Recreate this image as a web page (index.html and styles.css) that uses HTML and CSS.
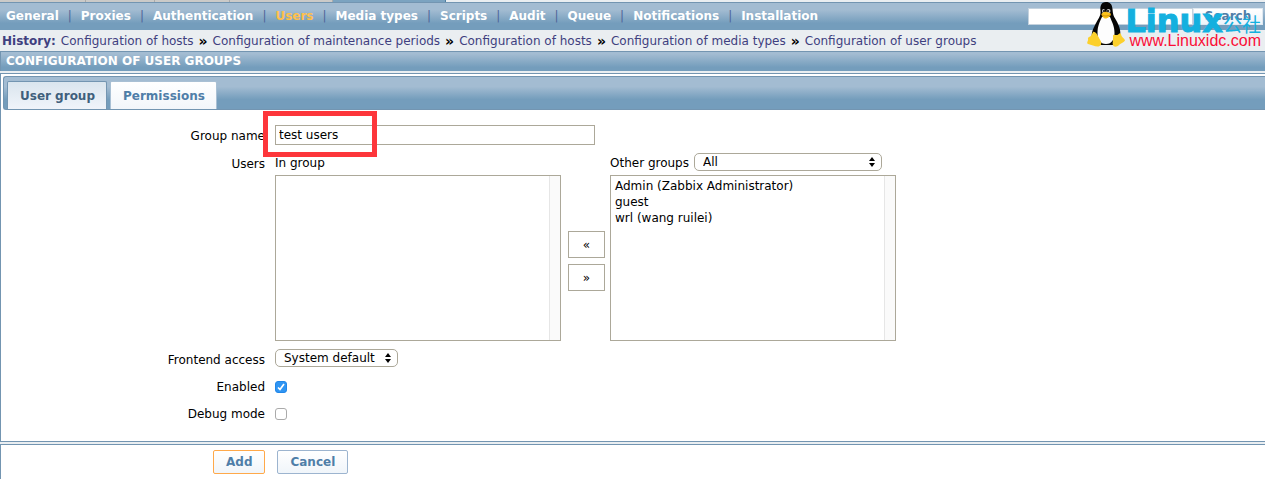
FILE: index.html
```
<!DOCTYPE html>
<html lang="en">
<head>
  <meta charset="utf-8">
  <title>Configuration of user groups</title>
  <link rel="stylesheet" href="styles.css">
</head>
<body>
  <div class="main-tabs">
    <span class="main-tab"></span>
    <span class="main-tab"></span>
    <span class="main-tab"></span>
    <span class="main-tab"></span>
    <span class="main-tab active"></span>
  </div>
  <div class="nav-bar">
    <nav class="nav-links">
      <a href="#">General</a>
      <a href="#">Proxies</a>
      <a href="#">Authentication</a>
      <a href="#" class="active">Users</a>
      <a href="#">Media types</a>
      <a href="#">Scripts</a>
      <a href="#">Audit</a>
      <a href="#">Queue</a>
      <a href="#">Notifications</a>
      <a href="#">Installation</a>
    </nav>
    <form class="search">
      <input type="text" aria-label="Search">
      <button type="button">Search</button>
    </form>
  </div>
  <div class="history">
    <b>History:</b>
    <a href="#">Configuration of hosts</a> <span>»</span>
    <a href="#">Configuration of maintenance periods</a> <span>»</span>
    <a href="#">Configuration of hosts</a> <span>»</span>
    <a href="#">Configuration of media types</a> <span>»</span>
    <a href="#">Configuration of user groups</a>
  </div>
  <h1>CONFIGURATION OF USER GROUPS</h1>

  <form class="group-form">
    <div class="panel">
      <div class="tabs">
        <button type="button" class="tab active">User group</button>
        <button type="button" class="tab">Permissions</button>
      </div>
      <div class="fields">
        <label for="name">Group name</label>
        <div class="name-field">
          <input type="text" id="name" value="test users">
          <div class="highlight"></div>
        </div>

        <label for="in-group">Users</label>
        <div class="twin-box">
          <div>
            <div class="list-head"><label for="in-group">In group</label></div>
            <select id="in-group" class="list" multiple></select>
          </div>
          <div class="move-buttons">
            <button type="button" aria-label="Add to group">«</button>
            <button type="button" aria-label="Remove from group">»</button>
          </div>
          <div>
            <div class="list-head">
              <label for="other-groups">Other groups</label>
              <select id="other-groups" class="dropdown wide">
                <option>All</option>
              </select>
            </div>
            <select class="list" aria-label="Users in other groups" multiple>
              <option>Admin (Zabbix Administrator)</option>
              <option>guest</option>
              <option>wrl (wang ruilei)</option>
            </select>
          </div>
        </div>

        <label for="access">Frontend access</label>
        <div>
          <select id="access" class="dropdown">
            <option>System default</option>
          </select>
        </div>

        <label for="enabled">Enabled</label>
        <div><input type="checkbox" id="enabled" checked></div>

        <label for="debug">Debug mode</label>
        <div><input type="checkbox" id="debug"></div>
      </div>
    </div>
    <div class="actions">
      <button type="button" class="primary">Add</button>
      <button type="button">Cancel</button>
    </div>
  </form>

  <div class="watermark">
    <svg width="38" height="45" viewBox="0 0 38 45">
      <path d="M19 0C14 0 13 4 13.500 9C14 14 11 17 8.500 22C6 27 3.500 32 5.500 37L12 43H27L32 37C35 31 32.500 24 29 18C26 13 26 12 25.500 7C25 2 23 0 19 0Z" fill="#050505"/>
      <path d="M15 15C13 19 10.500 24 10.500 31C10.500 37 13 42 19 42C25 42 27.500 37 27.500 31C27.500 24 25 20 23 15Z" fill="#fdfdfd"/>
      <ellipse cx="16.500" cy="9" rx="1.500" ry="2" fill="#ccc"/>
      <ellipse cx="21.500" cy="9" rx="2" ry="2" fill="#ccc"/>
      <circle cx="17" cy="9" r="1" fill="#000"/>
      <circle cx="21" cy="9" r="1" fill="#000"/>
      <path d="M14.500 12C16 10 18 9.500 19.500 10C22 10.500 24 11 24 12.500C23.500 14 21 16.500 18.500 16.500C16.500 16.500 14.500 14 14.500 12Z" fill="#fbc21a"/>
      <path d="M14.500 12.500C17 14.500 20 14.500 24 12.500" fill="none" stroke="#b47a08" stroke-width=".7"/>
      <path d="M6 30C8 29 10 32 11.500 35C13 38 15 40 14 42.500C12.500 45.500 9 44.500 6 43.500L1 42C-1 41 1.500 39 1 37C0.500 34.500 4 35 4.500 33Z" fill="#fcd02c"/>
      <path d="M26 34C26 32 28 33 30 33C32 33 32.500 30 34 32C34 35 38 37 38 38.500C37 40.500 34 41 32 43C30 45.500 26.500 45 26 43C25 41 26.500 38 26 34Z" fill="#fcd02c"/>
    </svg>
    <div class="watermark-text">
      <div class="watermark-name">Linux<span>公社</span></div>
      <div class="watermark-url">www.Linuxidc.com</div>
    </div>
  </div>
</body>
</html>
```
FILE: styles.css
```
* {
  box-sizing: border-box;
}

body {
  display: flex;
  flex-direction: column;
  margin: 0;
  position: relative;
  min-height: 100vh;
  background-color: #fff;
  color: #000;
  font-family: Verdana, "DejaVu Sans", sans-serif;
  font-size: 12px;
  line-height: 16px;
}

input,
select,
button {
  margin: 0;
  font-family: inherit;
  font-size: inherit;
  color: inherit;
}

a {
  text-decoration: none;
}

/* header */
.main-tabs {
  display: grid;
  grid-template-columns: 86px 69px 75px 103px 113px;
  height: 2px;
  background-color: #eaeef1;
}

.main-tab {
  background-color: #cbcac8;
  border-right: 1px solid #aaa;
}

.main-tab.active {
  background-color: #7ba3c0;
  border-color: #4d7ea0;
}

.nav-bar {
  display: flex;
  justify-content: space-between;
  align-items: flex-start;
  height: 28px;
  padding: 5px 2px 0 6px;
  border-top: 1px solid #7395b1;
  background: linear-gradient(#a3bcd2 25%, #749dbc 75%);
}

.nav-links {
  display: flex;
}

.nav-links a {
  color: #fff;
  font-weight: bold;
}

.nav-links a + a::before {
  content: "|";
  display: inline-block;
  width: 22px;
  text-align: center;
  font-weight: normal;
  color: #4e6599;
}

.nav-links .active {
  color: #ffc04a;
}

.search {
  display: flex;
}

.search input {
  width: 165px;
  height: 17px;
  border: 1px solid #c4d2de;
  background-color: #fff;
}

.search button {
  width: 70px;
  height: 17px;
  padding: 0;
  border: 1px solid #dfe8f0;
  background: linear-gradient(#fff, #eef4fa);
  color: #4f7ea8;
  font-weight: bold;
  line-height: 15px;
}

.history {
  display: flex;
  gap: 5px;
  height: 21px;
  padding: 3px 2px;
  background-color: #eaeef1;
  color: #000;
  white-space: nowrap;
}

.history b,
.history a {
  color: #403f7f;
}

.history span {
  font-size: 14px;
  font-weight: bold;
}

h1 {
  height: 20px;
  margin: 0 0 2px;
  padding: 0 5px;
  border-top: 1px solid #7395b1;
  border-left: 1px solid #7395b1;
  background: linear-gradient(#a3bcd2 10%, #749dbc 80%);
  color: #fff;
  font-size: 12px;
  line-height: 18px;
}

/* form panel */
.group-form {
  display: flex;
  flex: 1;
  flex-direction: column;
}

.panel {
  border: 1px solid #7395b1;
  border-right: none;
  padding: 2px 0 19px 2px;
  background-color: #fff;
  box-shadow: 0 -2px #eaeef1;
}

.tabs {
  display: flex;
  align-items: flex-end;
  gap: 3px;
  height: 34px;
  padding-left: 3px;
  border: 1px solid #7395b1;
  border-right: none;
  border-radius: 3px 0 0 3px;
  background: linear-gradient(#a3bcd2 30%, #749dbc 70%);
}

.tab {
  height: 28px;
  padding: 0 11px 0 12px;
  border: 1px solid #a9c0d4;
  border-bottom: none;
  border-radius: 2px 2px 0 0;
  background: linear-gradient(#fff, #f2f6fa);
  color: #4f7ea8;
  font-weight: bold;
}

.tab.active {
  border-color: #7395b1;
  background: linear-gradient(#dae5ee, #f0f4fa);
  color: #3f5f7c;
}

.fields {
  display: grid;
  grid-template-columns: 262px 1fr;
  grid-auto-rows: minmax(19px, auto);
  gap: 8px 10px;
  padding-top: 15px;
}

.fields > label {
  padding-top: 3px;
  text-align: right;
}

.name-field {
  position: relative;
}

.name-field input {
  display: block;
  width: 320px;
  height: 20px;
  padding: 0 3px;
  border: 1px solid #aca899;
}

/* red frame drawn over the group name */
.highlight {
  position: absolute;
  top: -14px;
  left: -12px;
  width: 114px;
  height: 46px;
  border: 5px solid #fd363b;
  pointer-events: none;
}

.twin-box {
  display: flex;
}

.list-head {
  display: flex;
  align-items: flex-end;
  gap: 5px;
  height: 18px;
  margin-bottom: 4px;
}

.list {
  display: block;
  width: 286px;
  height: 166px;
  padding: 3px 2px;
  border: 1px solid #aca899;
  border-radius: 0;
  outline: none;
  overflow: hidden;
  background: linear-gradient(90deg, #e6e6e6 1px, #fafafa 1px) right / 11px 100% no-repeat #fff;
}

.list option {
  min-height: 16px;
  padding: 0 2px;
  line-height: 16px;
}

.move-buttons {
  display: flex;
  flex-direction: column;
  gap: 6px;
  padding: 78px 5px 0 7px;
}

.move-buttons button {
  width: 37px;
  height: 27px;
  padding: 0;
  border: 1px solid #aca899;
  background-color: #fff;
}

.dropdown {
  display: block;
  width: 123px;
  height: 18px;
  padding: 0 8px;
  appearance: none;
  border: 1px solid #aca899;
  border-radius: 5px;
  background: url("data:image/svg+xml,%3Csvg xmlns='http://www.w3.org/2000/svg' width='6' height='10'%3E%3Cpath d='M0 4L3 0L6 4ZM0 6L3 10L6 6Z'/%3E%3C/svg%3E") right 6px center no-repeat #fff;
}

.dropdown.wide {
  width: 188px;
}

.fields input[type="checkbox"] {
  display: block;
  width: 12px;
  height: 12px;
  margin-top: 5px;
  appearance: none;
  border: 1px solid #aaa;
  border-radius: 3px;
  background-color: #fff;
}

.fields input[type="checkbox"]:checked {
  border-color: #2186e8;
  background: url("data:image/svg+xml,%3Csvg xmlns='http://www.w3.org/2000/svg' width='10' height='10'%3E%3Cpath d='M2 5.500L4 7.500L8 2' fill='none' stroke='white' stroke-width='1.700'/%3E%3C/svg%3E") center no-repeat #2f95f3;
}

.actions {
  display: flex;
  flex: 1;
  align-items: flex-start;
  gap: 12px;
  margin-top: 2px;
  padding: 5px 0 0 212px;
  border-top: 1px solid #7395b1;
  border-left: 1px solid #7395b1;
  box-shadow: 0 -2px #eaeef1;
}

.actions button {
  height: 24px;
  padding: 0 12px;
  border: 1px solid #9cb4cf;
  border-radius: 2px;
  background: linear-gradient(#fff, #f0f5fa);
  color: #4f7ea8;
  font-weight: bold;
}

.actions .primary {
  border-color: #ffa94a;
}

/* site mark over the top right corner */
.watermark {
  position: absolute;
  top: 2px;
  right: 4px;
  display: flex;
  pointer-events: none;
}

.watermark-name {
  height: 31px;
  color: #14b0df;
  font-family: "DejaVu Sans", sans-serif;
  font-size: 32px;
  font-weight: bold;
  line-height: 38px;
  white-space: nowrap;
  -webkit-text-stroke: 1px #14b0df;
}

.watermark-name span {
  font-family: "Noto Sans CJK SC", sans-serif;
  font-size: 19px;
  font-weight: normal;
  -webkit-text-stroke: 0;
}

.watermark-url {
  color: #fb0d37;
  font-family: "Liberation Sans", sans-serif;
  font-size: 16px;
  line-height: 16px;
  text-align: right;
}
```
